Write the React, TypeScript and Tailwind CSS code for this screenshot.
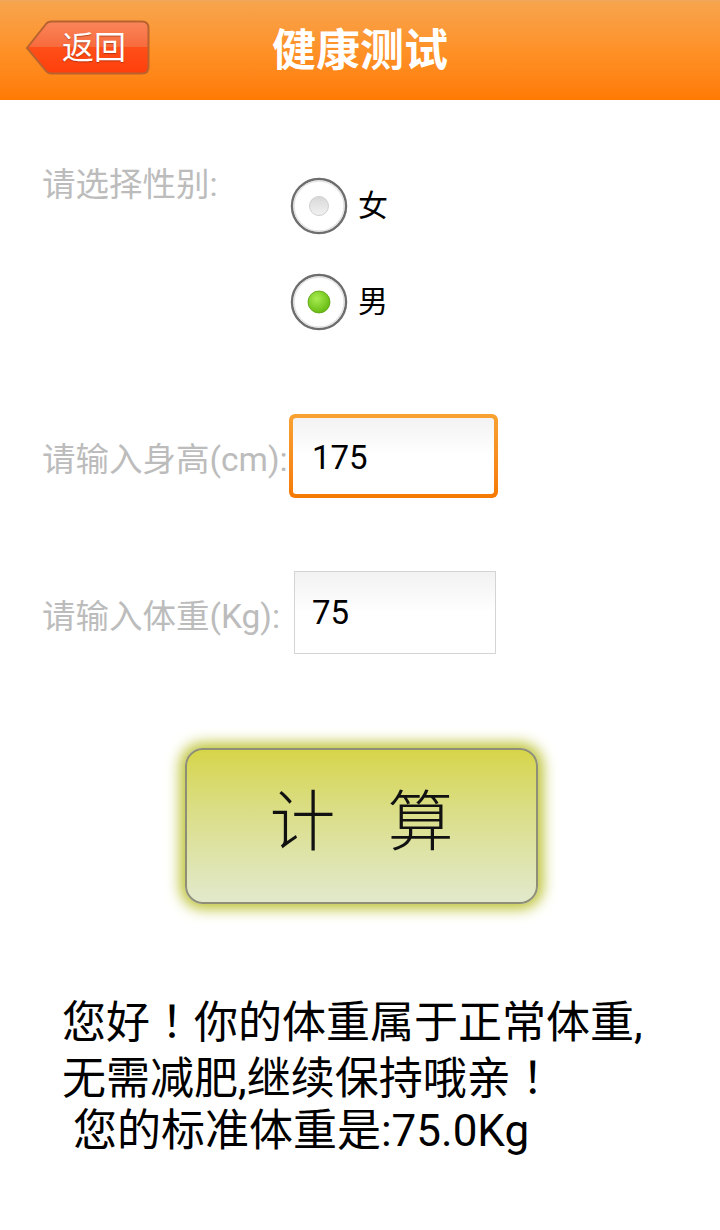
import React from "react";

const FONT = { fontFamily: '"Roboto", "Noto Sans CJK SC", sans-serif' };
const TC = { fontFamily: '"Noto Sans CJK TC", sans-serif' };

function BackButton() {
  return (
    <div className="relative w-[125px] h-[55px] flex items-center pl-[37px]">
      <svg className="absolute inset-0" width="125" height="55" viewBox="0 0 125 55">
        <defs>
          <linearGradient id="bb" x1="0" y1="0" x2="0" y2="1">
            <stop offset="0" stopColor="#f9865a" />
            <stop offset="0.5" stopColor="#f86a3c" />
            <stop offset="0.5" stopColor="#ff4f18" />
            <stop offset="1" stopColor="#ff3f0c" />
          </linearGradient>
        </defs>
        <path
          d="M2 28 L21 4 Q23 1.5 27 1.5 H117 Q123.5 1.5 123.5 8 V47 Q123.5 53.5 117 53.5 H27 Q23 53.5 21 51 Z"
          fill="url(#bb)"
          stroke="#b9622e"
          strokeWidth="2"
        />
      </svg>
      <span
        className="relative text-white text-[32px] leading-none"
        style={{ textShadow: "0 1px 1px rgba(120,30,0,0.5)" }}
      >
        返回
      </span>
    </div>
  );
}

function Radio({ checked }: { checked: boolean }) {
  return (
    <svg width="58" height="58" viewBox="0 0 58 58">
      <defs>
        <radialGradient id="gr" cx="0.4" cy="0.35" r="0.7">
          <stop offset="0" stopColor="#a8ec50" />
          <stop offset="1" stopColor="#62b80e" />
        </radialGradient>
        <linearGradient id="gy" x1="0" y1="0" x2="0" y2="1">
          <stop offset="0" stopColor="#d8d8d8" />
          <stop offset="1" stopColor="#f2f2f2" />
        </linearGradient>
      </defs>
      <circle cx="29" cy="29" r="27" fill="#fff" stroke="#6e6e6e" strokeWidth="2.5" />
      <circle cx="29" cy="29" r="25" fill="none" stroke="#e4e4e4" strokeWidth="1.5" />
      {checked ? (
        <circle cx="29" cy="29" r="11" fill="url(#gr)" stroke="#5aa010" strokeWidth="0.8" />
      ) : (
        <circle cx="29" cy="29" r="9.5" fill="url(#gy)" stroke="#cfcfcf" strokeWidth="1" />
      )}
    </svg>
  );
}

export default function App() {
  return (
    <div className="w-[720px] h-[1230px] bg-white overflow-hidden" style={FONT}>
      {/* Header */}
      <div className="h-[100px] grid grid-cols-[1fr_auto_1fr] items-center bg-gradient-to-b from-[#f7a44c] via-[#fe9126] to-[#ff7a02] border-t-2 border-[#f2a65a]">
        <div className="pl-[25px] self-start pt-[18px]">
          <BackButton />
        </div>
        <div className="text-white text-[44px] font-bold leading-none">健康测试</div>
        <div />
      </div>

      {/* Gender */}
      <div className="flex mt-[65px] pl-[42px]">
        <div className="w-[248px] text-[33.5px] leading-[40px] text-[#bcbcbc]">请选择性别:</div>
        <div className="flex flex-col gap-[38px] pt-[12px]">
          <div className="flex items-center gap-[10px]">
            <Radio checked={false} />
            <span className="text-[30px] text-black leading-none">女</span>
          </div>
          <div className="flex items-center gap-[10px]">
            <Radio checked={true} />
            <span className="text-[30px] text-black leading-none">男</span>
          </div>
        </div>
      </div>

      {/* Height */}
      <div className="flex items-center mt-[83px] pl-[42px]">
        <div className="w-[247px] text-[33.5px] leading-[40px] text-[#bcbcbc] pt-[8px] whitespace-nowrap">请输入身高(cm):</div>
        <div className="w-[209px] h-[84px] rounded-[6px] bg-gradient-to-b from-[#f8a232] to-[#f57a02] p-[4px]">
          <div className="w-full h-full rounded-[3px] bg-gradient-to-b from-[#f3f3f3] via-white to-white flex items-center pl-[19px] pt-[4px] text-[33px] text-black">
            175
          </div>
        </div>
      </div>

      {/* Weight */}
      <div className="flex items-center mt-[73px] pl-[42px]">
        <div className="w-[252px] text-[33.5px] leading-[40px] text-[#bcbcbc] pt-[8px] whitespace-nowrap">请输入体重(Kg):</div>
        <div className="w-[202px] h-[83px] border border-[#d4d4d4] bg-gradient-to-b from-[#f2f2f2] via-white to-white flex items-center pl-[17px] text-[33px] text-black">
          75
        </div>
      </div>

      {/* Button */}
      <div className="mt-[94px] pl-[185px]">
        <div className="w-[353px] h-[156px] rounded-[18px] border-2 border-[#8f8f78] bg-gradient-to-b from-[#d6d548] to-[#e2e9cb] shadow-[0_0_14px_5px_#bcc233] flex items-center justify-center gap-[52px] pb-[6px]">
          <span className="text-[66px] font-light leading-none text-[#111]">计</span>
          <span className="text-[66px] font-light leading-none text-[#111]">算</span>
        </div>
      </div>

      {/* Result */}
      <div className="mt-[89px] pl-[62px] text-[44px] leading-[52px] text-black whitespace-pre">
        <div>您好<span style={TC}>！</span>你的体重属于正常体重,</div>
        <div>无需减肥,继续保持哦亲<span style={TC}>！</span></div>
        <div> 您的标准体重是:75.0Kg</div>
      </div>
    </div>
  );
}
